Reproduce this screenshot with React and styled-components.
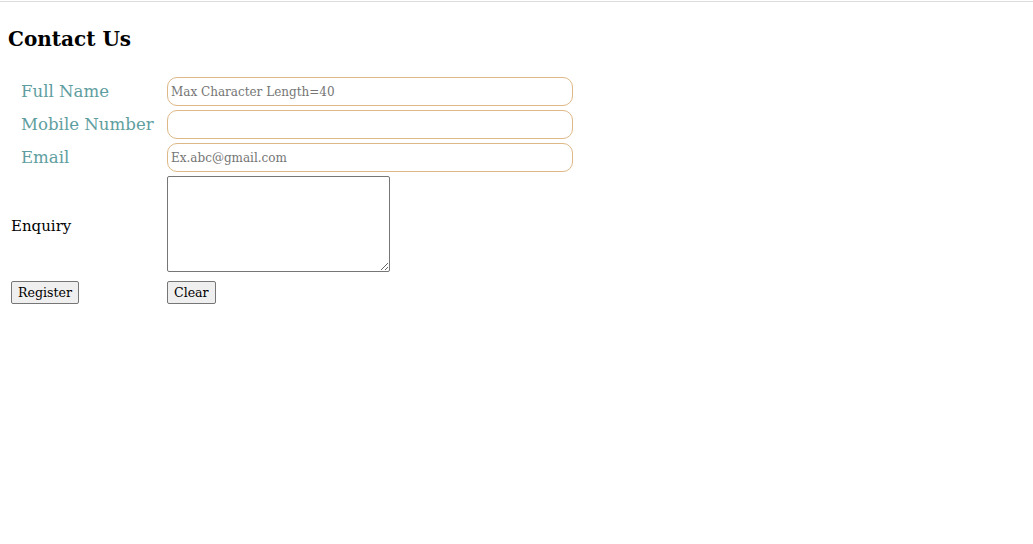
import React from "react";
import styled, { createGlobalStyle } from "styled-components";

const Global = createGlobalStyle`
  html, body { margin: 0; padding: 0; background: #fff; }
  body { font-family: "DejaVu Serif", serif; }
`;

const TopRule = styled.div`
  margin-top: 1px;
  border-top: 1px solid #dcdcdc;
`;

const Page = styled.main`
  padding: 0 8px;
`;

const Title = styled.h2`
  margin: 22px 0 23px;
  font-size: 20px;
  line-height: 30px;
  font-weight: bold;
  color: #000;
`;

const Form = styled.form`
  display: grid;
  grid-template-columns: 156px auto;
  justify-content: start;
  align-items: center;
  row-gap: 4px;
  margin-left: 3px;
`;

const Label = styled.label`
  font-size: ${(p) => (p.$accent ? "16.6px" : "15px")};
  color: ${(p) => (p.$accent ? "cadetblue" : "#000")};
  padding-left: ${(p) => (p.$accent ? "10px" : "0")};
  padding-top: ${(p) => (p.$accent ? "0" : "4px")};
  white-space: nowrap;
`;

const Field = styled.input`
  box-sizing: border-box;
  width: 406px;
  height: 29px;
  border: 1px solid burlywood;
  border-radius: 10px;
  padding: 0 3px;
  font-family: "DejaVu Serif", serif;
  font-size: 12px;
  color: #000;
  outline: none;
  &::placeholder { color: #757575; }
`;

const Area = styled.textarea`
  box-sizing: border-box;
  width: 223px;
  height: 96px;
  border: 1px solid #767676;
  border-radius: 2px;
  display: block;
  font-family: "DejaVu Serif", serif;
  font-size: 12px;
`;

const Actions = styled.div`
  margin-top: 5px;
  display: flex;
  align-items: center;
`;

const Button = styled.button`
  box-sizing: border-box;
  height: 23px;
  padding: 0 6px;
  font-family: "DejaVu Serif", serif;
  font-size: 12.6px;
  color: #000;
  background: #efefef;
  border: 1px solid #767676;
  border-radius: 2px;
`;

export default function App() {
  return (
    <>
      <Global />
      <TopRule />
      <Page>
        <Title>Contact Us</Title>
        <Form onSubmit={(e) => e.preventDefault()}>
          <Label $accent>Full Name</Label>
          <Field maxLength={40} placeholder="Max Character Length=40" />
          <Label $accent>Mobile Number</Label>
          <Field type="tel" />
          <Label $accent>Email</Label>
          <Field type="email" placeholder="Ex.abc@gmail.com" />
          <Label>Enquiry</Label>
          <Area />
          <Actions>
            <Button type="submit">Register</Button>
          </Actions>
          <Actions>
            <Button type="reset">Clear</Button>
          </Actions>
        </Form>
      </Page>
    </>
  );
}
